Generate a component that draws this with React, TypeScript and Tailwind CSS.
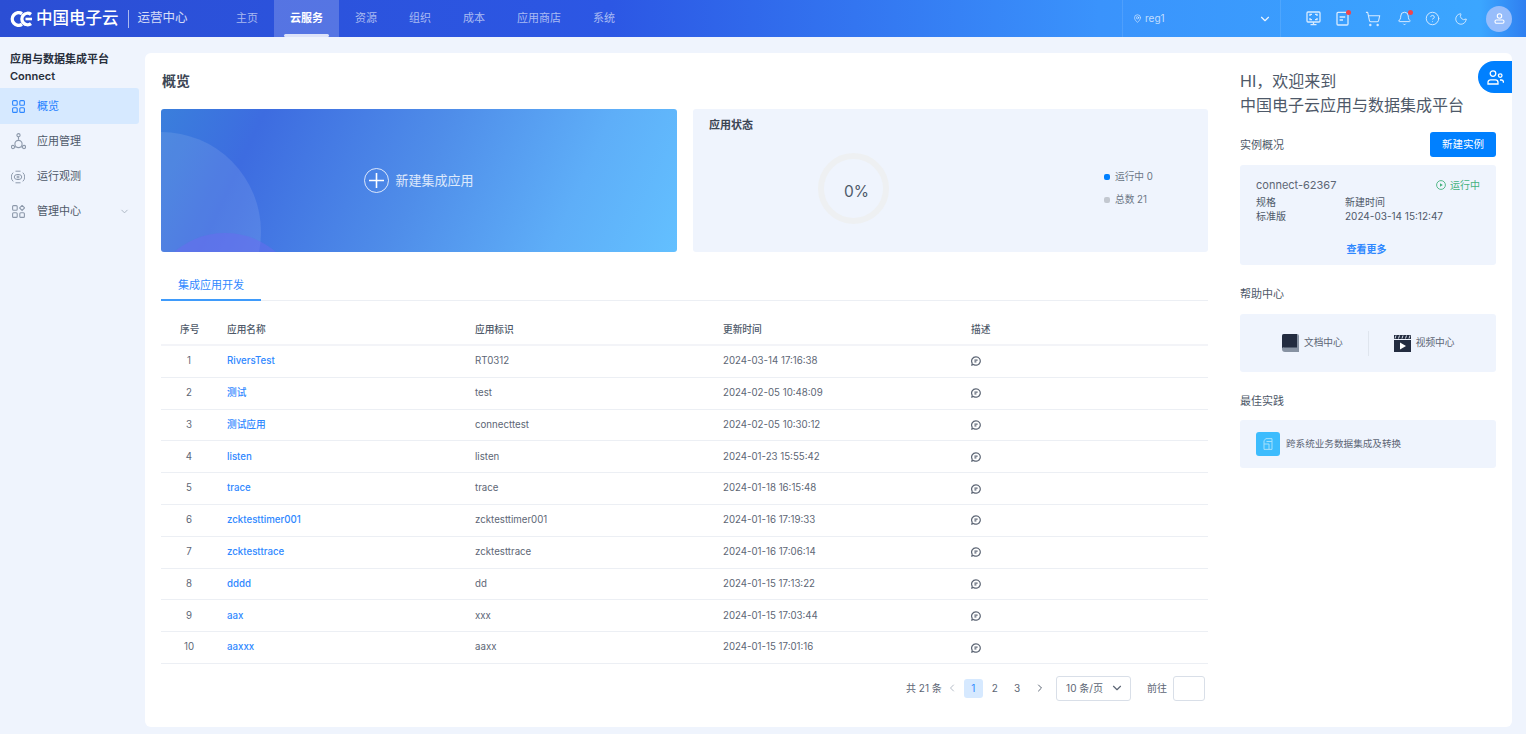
import { Bell, ChevronDown, ChevronLeft, ChevronRight, CircleHelp, Moon, ShoppingCart, MapPin } from "lucide-react"

const rows = [
  ["1", "RiversTest", "RT0312", "2024-03-14 17:16:38"],
  ["2", "测试", "test", "2024-02-05 10:48:09"],
  ["3", "测试应用", "connecttest", "2024-02-05 10:30:12"],
  ["4", "listen", "listen", "2024-01-23 15:55:42"],
  ["5", "trace", "trace", "2024-01-18 16:15:48"],
  ["6", "zcktesttimer001", "zcktesttimer001", "2024-01-16 17:19:33"],
  ["7", "zcktesttrace", "zcktesttrace", "2024-01-16 17:06:14"],
  ["8", "dddd", "dd", "2024-01-15 17:13:22"],
  ["9", "aax", "xxx", "2024-01-15 17:03:44"],
  ["10", "aaxxx", "aaxx", "2024-01-15 17:01:16"],
]

const navItems = ["主页", "云服务", "资源", "组织", "成本", "应用商店", "系统"]

function Logo() {
  return (
    <svg width="22" height="16" viewBox="0 0 22 16" fill="none" stroke="white" strokeWidth="3.400">
      <path d="M12 2.700A6.300 6.300 0 1 0 12 13.300" />
      <path d="M21 3.400A5.700 5.700 0 1 0 21 12.600" />
      <path d="M15.500 8h6.500" strokeWidth="2.600" />
    </svg>
  )
}

function GridIcon({ color }: { color: string }) {
  return (
    <svg width="13" height="13" viewBox="0 0 13 13" fill="none" stroke={color} strokeWidth="1.100">
      <rect x="0.600" y="0.600" width="4.600" height="4.600" rx="1" />
      <rect x="7.800" y="0.600" width="4.600" height="4.600" rx="1" />
      <rect x="0.600" y="7.800" width="4.600" height="4.600" rx="1" />
      <rect x="7.800" y="7.800" width="4.600" height="4.600" rx="1" />
    </svg>
  )
}

function AppIcon() {
  return (
    <svg width="15" height="17" viewBox="0 0 15 17" fill="none" stroke="#8d99ab" strokeWidth="1.100">
      <circle cx="7.500" cy="2.200" r="1.600" />
      <circle cx="2" cy="14" r="1.600" />
      <circle cx="13" cy="14" r="1.600" />
      <path d="M7.500 3.800v3M3.600 14h1.200M10.200 14h1.200" />
      <circle cx="7.500" cy="11" r="3.600" />
    </svg>
  )
}

function WatchIcon() {
  return (
    <svg width="14" height="14" viewBox="0 0 14 14" fill="none" stroke="#8d99ab" strokeWidth="1">
      <path d="M2.200 2.600A6 6 0 0 0 2.200 11.400M11.800 2.600A6 6 0 0 1 11.800 11.400M4.500 1.200h5M4.500 12.800h5" />
      <ellipse cx="7" cy="7" rx="3.800" ry="2.600" />
      <circle cx="7" cy="7" r="1" />
    </svg>
  )
}

function ManageIcon() {
  return (
    <svg width="13" height="13" viewBox="0 0 13 13" fill="none" stroke="#8d99ab" strokeWidth="1.100">
      <rect x="0.600" y="0.600" width="4.600" height="4.600" rx="1" />
      <path d="M10.100 0.400 12.600 2.900 10.100 5.400 7.600 2.900Z" />
      <rect x="0.600" y="7.800" width="4.600" height="4.600" rx="1" />
      <rect x="7.800" y="7.800" width="4.600" height="4.600" rx="1" />
    </svg>
  )
}

function ScreenIcon() {
  return (
    <svg width="15" height="15" viewBox="0 0 15 15" fill="none" stroke="#d8ebff" strokeWidth="1.300">
      <rect x="1" y="1" width="13" height="10" rx="1" />
      <path d="M4 5V3.400h2M11 5V3.400H9M4 7v1.600h2M11 7v1.600H9M4.500 13.600h6M7.500 11v2.600" />
    </svg>
  )
}

function OrderIcon() {
  return (
    <svg width="13" height="15" viewBox="0 0 13 15" fill="none" stroke="#d8ebff" strokeWidth="1.300">
      <rect x="1" y="1.400" width="11" height="12.600" rx="1" />
      <path d="M3.600 6h5.600M3.600 9h3.400" />
    </svg>
  )
}

function NoteIcon() {
  return (
    <svg width="10" height="10" viewBox="0 0 10 10" fill="none" stroke="#5d6675" strokeWidth="1.200">
      <path d="M5 .8a4.200 4.200 0 1 1-2.400 7.600L.9 9l.3-1.900A4.200 4.200 0 0 1 5 .8Z" />
      <path d="M3.400 4.200h3.200M3.400 5.900h2" />
    </svg>
  )
}

function SectionTitle({ children }: { children: string }) {
  return <div className="h-4 text-[11px] leading-4 text-[#4e5969]">{children}</div>
}

export default function App() {
  return (
    <div className="flex h-[734px] w-[1526px] flex-col overflow-hidden bg-[#eff4fd] [font-family:Inter,'Noto_Sans_CJK_SC',sans-serif] text-[#4e5969]">
      <header className="flex h-[37px] shrink-0 items-center bg-[linear-gradient(90deg,#2b4ed4_0%,#2c57e4_40%,#3a93fc_72%,#3ba6ff_97%,#2f7ff0_100%)] text-white">
        <div className="flex w-[220px] items-center pl-[10px]">
          <Logo />
          <span className="ml-[4px] text-[16.500px] font-medium leading-none">中国电子云</span>
          <span className="ml-[9px] h-[18px] w-px bg-white/60" />
          <span className="ml-[9px] text-[12.500px] text-white/80">运营中心</span>
        </div>
        <nav className="flex h-full">
          {navItems.map((item) =>
            item === "云服务" ? (
              <div key={item} className="relative flex h-full items-center bg-white/20 px-4 text-[11px] font-semibold text-white">
                {item}
                <span className="absolute bottom-0 left-[10px] right-[10px] h-[3px] rounded-full bg-white/80" />
              </div>
            ) : (
              <div key={item} className="flex h-full items-center px-4 text-[11px] text-white/60">
                {item}
              </div>
            )
          )}
        </nav>
        <div className="ml-[491px] flex h-full w-[159px] items-center justify-between border-x border-white/10 pl-[10px] pr-[8px]">
          <div className="flex items-center gap-[3px] text-[10px] text-white/70">
            <MapPin size={9} />
            reg1
          </div>
          <ChevronDown size={14} className="text-white/90" />
        </div>
        <div className="ml-[25px] flex items-center">
          <ScreenIcon />
          <div className="relative ml-[15px]">
            <OrderIcon />
            <span className="absolute -right-[2px] -top-[1px] h-[5px] w-[5px] rounded-full bg-[#f0454c]" />
          </div>
          <ShoppingCart size={16} strokeWidth={1.600} className="ml-[16px] text-[#d8ebff]" />
          <div className="relative ml-[16px]">
            <Bell size={15} strokeWidth={1.600} className="text-[#d8ebff]" />
            <span className="absolute -right-[1px] -top-[1px] h-[5px] w-[5px] rounded-full bg-[#f0454c]" />
          </div>
          <CircleHelp size={15} strokeWidth={1.500} className="ml-[13px] text-[#d8ebff]" />
          <Moon size={14} strokeWidth={1.500} className="ml-[14px] text-[#d8ebff]" />
          <div className="ml-[18px] flex h-[26px] w-[26px] items-center justify-center rounded-full bg-[#97bdfb]">
            <svg width="11" height="11" viewBox="0 0 11 11" fill="none" stroke="white" strokeWidth="1.100">
              <circle cx="5.500" cy="3" r="2.200" />
              <rect x="1" y="7" width="9" height="3.200" rx="1.400" />
            </svg>
          </div>
        </div>
      </header>

      <div className="flex min-h-0 flex-1">
        <aside className="w-[145px] shrink-0 pt-[14px]">
          <div className="pl-[10px] text-[11px] font-semibold leading-[17px] text-[#272e3b]">
            <div>应用与数据集成平台</div>
            <div>Connect</div>
          </div>
          <div className="mt-[3px] flex h-[36px] w-[139px] items-center gap-[12px] rounded-r-[3px] bg-[#d6e9ff] pl-[12px] text-[11px] text-[#1f7fff]">
            <GridIcon color="#2d87ff" />
            概览
          </div>
          <div className="flex h-[35px] w-[139px] items-center gap-[11px] pl-[11px] text-[11px]">
            <AppIcon />
            应用管理
          </div>
          <div className="flex h-[35px] w-[139px] items-center gap-[12px] pl-[11px] text-[11px]">
            <WatchIcon />
            运行观测
          </div>
          <div className="flex h-[35px] w-[139px] items-center gap-[12px] pl-[12px] text-[11px]">
            <ManageIcon />
            管理中心
            <ChevronDown size={11} className="ml-[26px] text-[#a9b2bf]" />
          </div>
        </aside>

        <main className="mt-4 flex h-[674px] w-[1367px] rounded-[6px] bg-white">
          <section className="w-[1063px] pl-4">
            <h1 className="mt-[18px] h-5 pl-px text-[14px] font-semibold leading-5 text-[#3c4554]">概览</h1>
            <div className="mt-[18px] flex h-[143px] gap-4">
              <div className="relative flex w-[516px] items-center justify-center gap-[6px] overflow-hidden rounded-[3px] bg-[linear-gradient(115deg,#3a7fdc_0%,#3d6ce0_18%,#4f8de9_50%,#5eaef8_78%,#63c0ff_100%)]">
                <div className="absolute -left-[100px] top-[23px] h-[200px] w-[200px] rounded-full bg-white/10" />
                <div className="absolute -left-[14px] top-[124px] h-[156px] w-[156px] rounded-full bg-[#6a6cf0]/50" />
                <div className="relative flex h-[25px] w-[25px] items-center justify-center rounded-full border border-white/80">
                  <svg width="15" height="15" viewBox="0 0 15 15" stroke="white" strokeWidth="1.600">
                    <path d="M7.500 0v15M0 7.500h15" />
                  </svg>
                </div>
                <span className="relative text-[13px] text-white/80">新建集成应用</span>
              </div>
              <div className="relative w-[515px] rounded-[3px] bg-[#eff4fd] px-4 pt-[9px]">
                <div className="text-[11px] font-semibold leading-[14px] text-[#3c4554]">应用状态</div>
                <div className="flex">
                  <div className="relative ml-[109px] mt-[21px] flex h-[71px] w-[71px] items-center justify-center rounded-full border-[6px] border-[#eef0f2]">
                    <span className="relative left-[3px] top-[3px] text-[15.500px] text-[#4e5969]">0%</span>
                  </div>
                  <div className="ml-[215px] mt-[37px] text-[9.700px] text-[#6b7685]">
                    <div className="flex h-4 items-center gap-[5px]">
                      <span className="h-[6px] w-[6px] rounded-[2px] bg-[#0080ff]" />
                      运行中 0
                    </div>
                    <div className="mt-[7px] flex h-4 items-center gap-[5px]">
                      <span className="h-[6px] w-[6px] rounded-[2px] bg-[#c3c8d0]" />
                      总数 21
                    </div>
                  </div>
                </div>
              </div>
            </div>

            <div className="flex h-[49px] items-end border-b border-[#eceff4]">
              <div className="-mb-px flex h-[32px] w-[100px] items-start justify-center border-b-2 border-[#3f9bfb] pt-[8px] text-[11px] leading-[16px] text-[#2f88ff]">
                集成应用开发
              </div>
            </div>

            <div className="grid h-[45px] grid-cols-[66px_248px_248px_248px_1fr] items-center border-b-2 border-[#f3f4f8] pt-[16px] text-[9.700px] font-medium text-[#4e5969]">
              <div className="pl-[19px]">序号</div>
              <div>应用名称</div>
              <div>应用标识</div>
              <div>更新时间</div>
              <div>描述</div>
            </div>
            {rows.map((r) => (
              <div key={r[0]} className="grid h-[31.800px] grid-cols-[66px_248px_248px_248px_1fr] items-center border-b border-[#eceff4] text-[9.700px] text-[#5d6675]">
                <div className="w-[56px] text-center">{r[0]}</div>
                <div className="font-medium text-[#2f88ff]">{r[1]}</div>
                <div>{r[2]}</div>
                <div>{r[3]}</div>
                <div><NoteIcon /></div>
              </div>
            ))}

            <div className="mt-[12px] flex h-[25px] items-center text-[10px] text-[#5d6675]">
              <span className="ml-[745px]">共 21 条</span>
              <ChevronLeft size={12} className="ml-[4px] text-[#b5bcc7]" />
              <span className="ml-[6px] flex h-[19px] w-[19px] items-center justify-center rounded-[3px] bg-[#d6e9ff] text-[#2f88ff]">1</span>
              <span className="ml-[9px]">2</span>
              <span className="ml-[16px]">3</span>
              <ChevronRight size={12} className="ml-[14px]" />
              <div className="ml-[10px] flex h-[25px] w-[75px] items-center justify-between rounded-[3px] border border-[#d9dfe8] pl-[9px] pr-[6px]">
                10 条/页
                <ChevronDown size={14} />
              </div>
              <span className="ml-[16px]">前往</span>
              <div className="ml-[6px] h-[25px] w-[32px] rounded-[3px] border border-[#d9dfe8]" />
            </div>
          </section>

          <section className="relative w-[304px] pl-[32px] pr-4 pt-4">
            <div className="absolute right-0 top-2 flex h-[32px] w-[34px] items-center justify-center rounded-l-full bg-[#0080ff]">
              <svg width="17" height="15" viewBox="0 0 17 15" fill="none" stroke="white" strokeWidth="1.300">
                <circle cx="6" cy="3.600" r="2.800" />
                <path d="M1 14v-1.600A2.600 2.600 0 0 1 3.600 9.800h4.800A2.600 2.600 0 0 1 11 12.400V14Z" />
                <circle cx="13.200" cy="5.600" r="1.800" />
                <path d="M13 10h1.400a2 2 0 0 1 2 2v.8" />
              </svg>
            </div>
            <div className="whitespace-nowrap text-[16px] leading-[24px] text-[#4e5969]">
              <div>HI，欢迎来到</div>
              <div>中国电子云应用与数据集成平台</div>
            </div>

            <div className="mt-[15px] flex h-[25px] items-center justify-between">
              <SectionTitle>实例概况</SectionTitle>
              <button className="h-[25px] w-[66px] rounded-[3px] bg-[#0080ff] text-[10.500px] text-white">新建实例</button>
            </div>
            <div className="mt-2 h-[100px] rounded-[3px] bg-[#eff4fd] px-4 pt-[12px] text-[10px] leading-[14px]">
              <div className="flex h-4 items-center justify-between">
                <span className="text-[11px] text-[#5d6675]">connect-62367</span>
                <span className="flex items-center gap-[4px] text-[#45b27e]">
                  <svg width="10" height="10" viewBox="0 0 10 10" fill="none" stroke="#45b27e" strokeWidth="0.900">
                    <circle cx="5" cy="5" r="4.400" />
                    <path d="M4 3.200 6.800 5 4 6.800Z" fill="#45b27e" stroke="none" />
                  </svg>
                  运行中
                </span>
              </div>
              <div className="mt-[2px] flex"><span className="w-[89px]">规格</span><span>新建时间</span></div>
              <div className="flex"><span className="w-[89px]">标准版</span><span>2024-03-14 15:12:47</span></div>
              <div className="mt-[19px] pr-[3px] text-center font-semibold text-[#2f88ff]">查看更多</div>
            </div>

            <div className="mt-[21px]"><SectionTitle>帮助中心</SectionTitle></div>
            <div className="mt-[12px] flex h-[58px] items-center rounded-[3px] bg-[#eff4fd] text-[9.700px] text-[#5d6675]">
              <div className="ml-[42px] flex items-center gap-[5px]">
                <svg width="17" height="18" viewBox="0 0 17 18">
                  <path d="M2 0h13a2 2 0 0 1 2 2v16H3a3 3 0 0 1-3-3V2a2 2 0 0 1 2-2Z" fill="#8792a2" />
                  <path d="M2 0h13v13.500H2.500A2.500 2.500 0 0 0 0 14V2a2 2 0 0 1 2-2Z" fill="#232c40" />
                </svg>
                文档中心
              </div>
              <span className="ml-[25px] h-[25px] w-px bg-[#dfe5ee]" />
              <div className="ml-[25px] flex items-center gap-[5px]">
                <svg width="17" height="17" viewBox="0 0 17 17">
                  <path d="M0 0h17v4H0Z" fill="#232c40" />
                  <path d="M2 .5 1 3.500M5.500 .5l-1 3M9 .5l-1 3M12.500 .5l-1 3M16 .5l-1 3" stroke="#eff4fd" strokeWidth="0.900" />
                  <path d="M0 5h17v12H0Z" fill="#232c40" />
                  <path d="M6 7.500 12 11l-6 3.500Z" fill="white" />
                </svg>
                视频中心
              </div>
            </div>

            <div className="mt-[21px]"><SectionTitle>最佳实践</SectionTitle></div>
            <div className="mt-[11px] flex h-[48px] items-center gap-[6px] rounded-[3px] bg-[#eff4fd] pl-4 text-[9.600px] text-[#5d6675]">
              <div className="flex h-6 w-6 items-center justify-center rounded-[3px] bg-[#3dbcfd]">
                <svg width="10" height="12" viewBox="0 0 10 12" fill="none" stroke="#a5e0fb" strokeWidth="1">
                  <path d="M1 2.500 3 .6h6v10.800H1Z" />
                  <path d="M1 6h5v5.400M3.500 3.500H9" />
                </svg>
              </div>
              跨系统业务数据集成及转换
            </div>
          </section>
        </main>
      </div>
    </div>
  )
}
